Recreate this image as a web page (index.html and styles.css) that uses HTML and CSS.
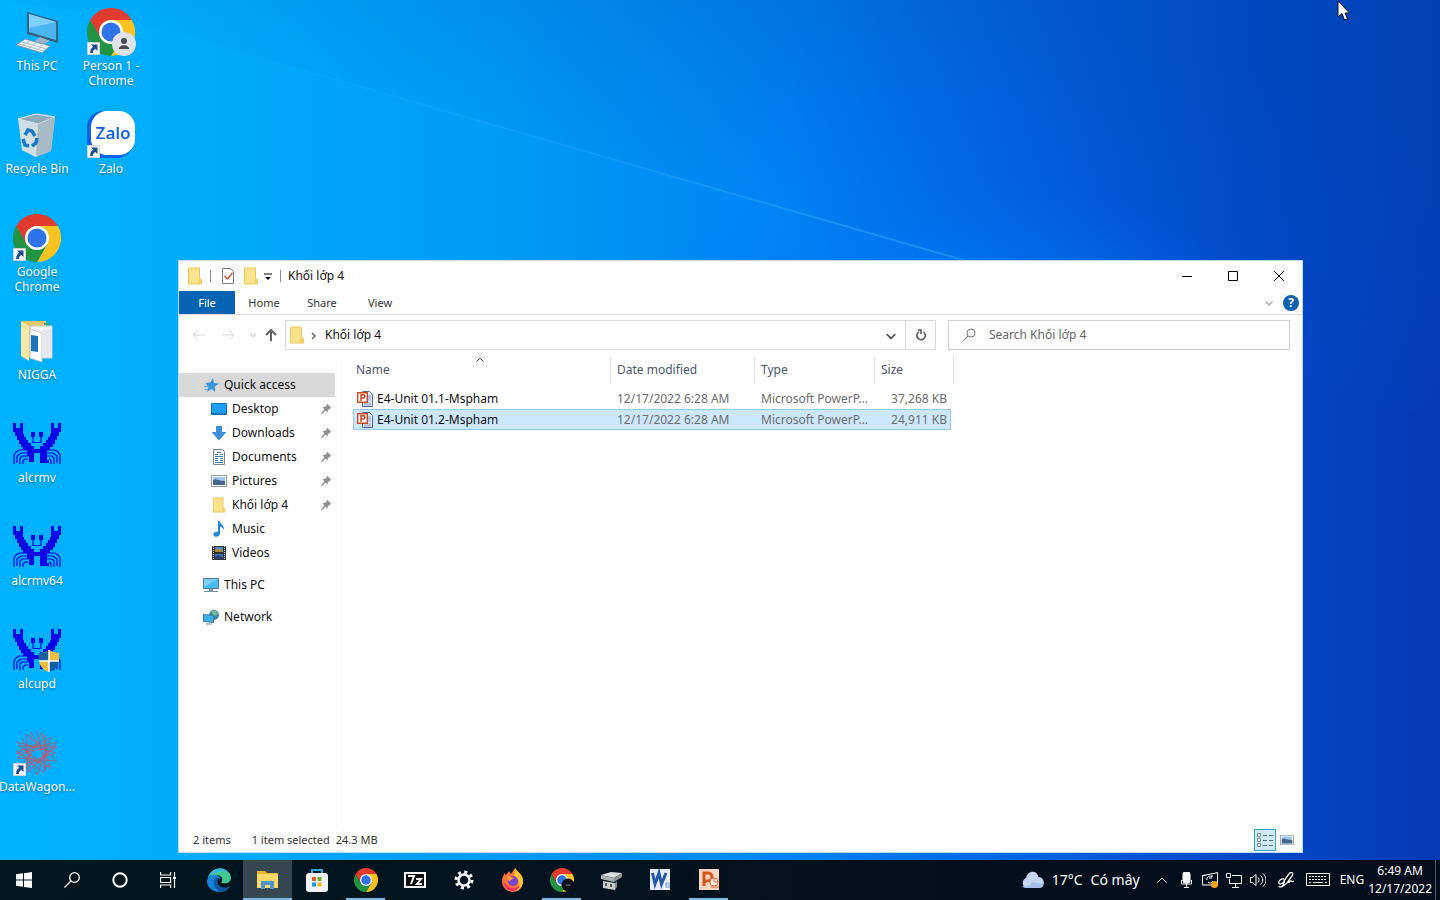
FILE: index.html
```
<!DOCTYPE html>
<html lang="vi">
<head>
  <meta charset="UTF-8">
  <title>Khối lớp 4</title>
  <link rel="stylesheet" href="styles.css">
</head>
<body>

  <!-- Shared icons -->
  <svg class="sprite" aria-hidden="true">
    <symbol id="chrome" viewBox="0 0 48 48">
      <path d="M24 24L3.200 12A24 24 0 0 1 44.800 12z" fill="#e33b2e"/>
      <path d="M24 12H44.800A24 24 0 0 1 24 48L34.400 30z" fill="#fcc31e"/>
      <path d="M34.400 30L24 48A24 24 0 0 1 3.200 12L13.600 30z" fill="#229342"/>
      <path d="M3.200 12L13.600 30 24 24V12z" fill="#e33b2e"/>
      <circle cx="24" cy="24" r="12" fill="#fff"/>
      <circle cx="24" cy="24" r="9.500" fill="#2f73e8"/>
    </symbol>
    <symbol id="shortcut" viewBox="0 0 13 13">
      <path d="M.5.5h12v12H.5z" fill="#f8f8f8" stroke="#c9d3da"/>
      <path d="M4 2.500h6.500V9L8.400 7C6.500 8 5.800 9.200 5.800 11H3.200C3 8.200 4 6.300 6.200 4.800z" fill="#1d4c8f"/>
    </symbol>
    <symbol id="crab" viewBox="0 0 48 42">
      <path fill="#0505e6" d="M0 0h3v5h4V0h3v11h1v3h2v3h2v3h3v3h3v3h6v-3h3v-3h3v-3h2v-3h2v-3h1V0h3v5h4V0h3v9h-2v4h-2v4h-2v4h-2v3h-3v3h-3v10h2v3h-9V30h-6v9h-5v-6h-2v-6h-4v-3H8v-3H6v-4H4v-4H2V9H0z"/>
      <path fill="#0505e6" d="M18 9h4v5h-4zM26 9h4v5h-4z"/>
      <path fill="none" stroke="#0505e6" stroke-width="1.200" d="M20 14v5.500h8V14M14 27H6l-3 2-2 3v9M14 30H8l-4 3v7M15 33H9l-2 2v6M15 36h-3l-2 2v3M34 27h8l3 2 2 3v9M34 30h6l4 3v7M34 33h5l2 2v6M36 36h1l1 2v3"/>
    </symbol>
    <symbol id="folder" viewBox="0 0 16 18">
      <path d="M1.500 1h11v10l2 2v4h-13z" fill="#fbe28d" stroke="#e9c65a"/>
      <path d="M12.500 11l2 2v4h-3v-4z" fill="#f3d06b"/>
    </symbol>
    <symbol id="pin" viewBox="0 0 12 12">
      <path d="M7 .5L11.500 5l-1.600.4-1.900 2 .2 2.400L5.700 7.800 1 11.500.6 11 4.300 6.300 2.300 4l2.400.1 2-1.900z" fill="#8d9298"/>
    </symbol>
    <symbol id="ppt" viewBox="0 0 16 16">
      <path d="M5.500.5h7l3 3v12h-10z" fill="#eaf0fb" stroke="#50679c"/>
      <path d="M11 5h3M11 7h3M11 9h3M7 12h7M7 14h7" stroke="#8499c8"/>
      <path d="M.7 1.700h9.600v9.600H.7z" fill="#fff" stroke="#cf4a24" stroke-width="1.400"/>
      <path d="M4 10V3.800h2.300a1.500 1.500 0 0 1 0 3.200H4" fill="none" stroke="#cf4a24" stroke-width="1.500"/>
    </symbol>
    <symbol id="picture" viewBox="0 0 16 12">
      <path d="M.5.5h15v11H.5z" fill="#fff" stroke="#8c99a6"/>
      <path d="M2 2h12v8H2z" fill="#9cc8ee"/>
      <path d="M2 5c3-2 5 1 12 1v4H2z" fill="#486a8c"/>
    </symbol>
    <symbol id="chevron-down" viewBox="0 0 10 10">
      <path d="M1.500 3.500L5 7l3.500-3.500" fill="none" stroke="currentColor" stroke-width="1.500"/>
    </symbol>
  </svg>

  <div class="screen">
    <main class="desktop">
      <svg class="wallpaper" viewBox="0 0 1440 860" preserveAspectRatio="none" aria-hidden="true">
        <defs>
          <linearGradient id="base" x1="0" y1="0" x2="1" y2="0">
            <stop offset="0" stop-color="#00b2ff"/>
            <stop offset=".12" stop-color="#00adfc"/>
            <stop offset=".35" stop-color="#009bf5"/>
            <stop offset=".55" stop-color="#0084f4"/>
            <stop offset=".7" stop-color="#0266e4"/>
            <stop offset=".86" stop-color="#0349ca"/>
            <stop offset="1" stop-color="#043ab5"/>
          </linearGradient>
          <linearGradient id="shade" gradientUnits="userSpaceOnUse" x1="540" y1="140" x2="620" y2="-120">
            <stop offset="0" stop-color="#0058c8" stop-opacity=".04"/>
            <stop offset="1" stop-color="#004cb4" stop-opacity=".36"/>
          </linearGradient>
          <linearGradient id="beam" x1="0" y1="0" x2="1" y2="0">
            <stop offset="0" stop-color="#2fb4ff" stop-opacity="0"/>
            <stop offset="1" stop-color="#2fa0ff" stop-opacity=".6"/>
          </linearGradient>
          <radialGradient id="glow">
            <stop offset="0" stop-color="#0086ff" stop-opacity=".8"/>
            <stop offset="1" stop-color="#0070f0" stop-opacity="0"/>
          </radialGradient>
        </defs>
        <path d="M0 0h1440v860H0z" fill="url(#base)"/>
        <path d="M0 0L130 20 950 256 1440 420V0z" fill="url(#shade)"/>
        <ellipse cx="950" cy="340" rx="340" ry="160" fill="url(#glow)"/>
        <path d="M150 26L970 262" fill="none" stroke="url(#beam)" stroke-width="2"/>
      </svg>

      <div class="icons">
        <a class="shortcut" href="#">
          <svg class="big" viewBox="0 0 48 48">
            <path d="M14 4l31 9v22l-31-9z" fill="#38617d"/><path d="M16 6l27 8v18l-27-8z" fill="#4bb5f2"/><path d="M16 6l27 8L16 20z" fill="#7ed0fb"/>
            <path d="M27 29l10 4-6 3-9-3z" fill="#9db6c6"/><path d="M12 31l25 7-8 7-26-8z" fill="#eef3f6" stroke="#8397a5"/><path d="M9 34l25 7M6 36l25 7M17 33l-8 5M23 35l-7 5M30 37l-7 6" stroke="#a5b5bf" stroke-width=".8"/>
          </svg>
          <span>This PC</span>
        </a>
        <a class="shortcut" href="#">
          <svg class="big" viewBox="0 0 48 48">
            <path d="M5 8l18-5 19 3-4 34-15 6-14-7z" fill="#bccdd8"/><path d="M5 8l18-5 19 3-17 7z" fill="#8fa9b9" stroke="#e3eef4"/><path d="M25 13l17-7-4 34-15 6z" fill="#a9bac6"/><path d="M6 9l19 4-2 33-14-7z" fill="#cfdde5"/>
            <path d="M12 24l3-5 4 1 3 5M10 28l2 6 4 1M19 35l4-3 1-5" fill="none" stroke="#1678c8" stroke-width="3.500"/>
          </svg>
          <span>Recycle Bin</span>
        </a>
        <a class="shortcut" href="#">
          <svg class="big"><use href="#chrome"/></svg>
          <svg class="arrow"><use href="#shortcut"/></svg>
          <span>Google Chrome</span>
        </a>
        <a class="shortcut" href="#">
          <svg class="big" viewBox="0 0 48 48">
            <path d="M9 4h24v36H14l-5-3z" fill="#e6c76c"/><path d="M17 9h22v32H17z" fill="#f6f8fa" stroke="#c4ccd2"/><path d="M17 12l12 4v29l-12-4z" fill="#fff" stroke="#bcc6cc"/><path d="M18 18l7 1v16l-7-1z" fill="#1c74bd"/><path d="M29 13l10-2v29l-10-2z" fill="#e5e9ed"/><path d="M8 4l8 5v35l-8-5z" fill="#fbe8a4"/><path d="M31 7h6" stroke="#3aa878" stroke-width="2"/>
          </svg>
          <span>NIGGA</span>
        </a>
        <a class="shortcut" href="#">
          <svg class="big"><use href="#crab"/></svg>
          <span>alcrmv</span>
        </a>
        <a class="shortcut" href="#">
          <svg class="big"><use href="#crab"/></svg>
          <span>alcrmv64</span>
        </a>
        <a class="shortcut" href="#">
          <svg class="big"><use href="#crab"/></svg>
          <svg class="shield" viewBox="0 0 22 22"><path d="M11 0c3 2 6 3 10 3 1 9-2 15-10 19C3 18 0 12 1 3c4 0 7-1 10-3z" fill="#f6bd3a"/><path d="M11 0v11H1V3c4 0 7-1 10-3zM11 11h10c-1 5-4 9-10 11z" fill="#12609f"/><path d="M11 0v11h10V3c-4 0-7-1-10-3zM11 11H1c1 5 4 9 10 11z" fill="#f6bd3a"/><path d="M11 0v22M1 11h20" stroke="#fff" stroke-width="1.500"/></svg>
          <span>alcupd</span>
        </a>
        <a class="shortcut" href="#">
          <svg class="big" viewBox="0 0 48 48" fill="none" stroke="#8c6d8d">
            <path d="M24 2l9 39L4 13l39 11L8 36 33 6l-2 38L4 22l40-9-29 30L13 5l31 27-40-3L38 8 24 46 9 9"/>
            <path d="M18 3l20 35L3 24l41-6-33 22L29 3l8 37L6 17h37L15 43z" stroke="#d0566f" stroke-width=".7"/><circle cx="24" cy="24" r="9"/>
          </svg>
          <svg class="arrow"><use href="#shortcut"/></svg>
          <span>DataWagon...</span>
        </a>
        <a class="shortcut" href="#">
          <svg class="big"><use href="#chrome"/></svg>
          <svg class="arrow"><use href="#shortcut"/></svg>
          <svg class="profile" viewBox="0 0 24 24"><circle cx="12" cy="12" r="12" fill="#dfe3e8"/><circle cx="12" cy="9" r="3" fill="#474c54"/><path d="M7 17c0-5 10-5 10 0z" fill="#474c54"/></svg>
          <span>Person 1 - Chrome</span>
        </a>
        <a class="shortcut" href="#">
          <svg class="big" viewBox="0 0 48 48">
            <rect width="46" height="47" rx="16" fill="#0a62e6"/><rect x="4" width="44" height="44" rx="16" fill="#fff"/>
            <text class="zalo" x="26" y="28" text-anchor="middle">Zalo</text>
          </svg>
          <svg class="arrow"><use href="#shortcut"/></svg>
          <span>Zalo</span>
        </a>
      </div>

      <section class="window">
        <header class="titlebar">
          <svg class="i18"><use href="#folder"/></svg>
          <i class="bar"></i>
          <svg class="i18 check" viewBox="0 0 16 18"><path d="M2.500 1.500h8l3 3v12h-11z" fill="#fff" stroke="#777"/><path d="M4.500 9l3 3 5-6" fill="none" stroke="#d1502e" stroke-width="1.500"/></svg>
          <svg class="i18"><use href="#folder"/></svg>
          <svg class="quick" viewBox="0 0 8 8"><path d="M0 1h8" stroke="#000"/><path d="M1 4h6L4 7z"/></svg>
          <i class="bar"></i>
          <h1>Khối lớp 4</h1>
          <div class="controls">
            <button aria-label="Minimize"><svg viewBox="0 0 10 10"><path d="M0 5.500h10" stroke="#000"/></svg></button>
            <button aria-label="Maximize"><svg viewBox="0 0 10 10"><path d="M.5.500h9v9h-9z" fill="none" stroke="#000"/></svg></button>
            <button aria-label="Close"><svg viewBox="0 0 10 10"><path d="M0 0l10 10M10 0L0 10" stroke="#000"/></svg></button>
          </div>
        </header>

        <nav class="tabs">
          <button class="file">File</button>
          <button>Home</button>
          <button>Share</button>
          <button>View</button>
          <svg class="i10"><use href="#chevron-down"/></svg>
          <button class="help" aria-label="Help">?</button>
        </nav>

        <div class="toolbar">
          <button class="back off" aria-label="Back"><svg viewBox="0 0 14 12"><path d="M6 1L1 6l5 5M1 6h12"/></svg></button>
          <button class="off" aria-label="Forward"><svg viewBox="0 0 14 12"><path d="M8 1l5 5-5 5M13 6H1"/></svg></button>
          <button class="recent" aria-label="Recent"><svg class="i10"><use href="#chevron-down"/></svg></button>
          <button class="up" aria-label="Up"><svg viewBox="0 0 12 14"><path d="M1 7l5-5 5 5M6 2v11"/></svg></button>
          <div class="address">
            <svg class="i18"><use href="#folder"/></svg>
            <svg class="next" viewBox="0 0 6 8"><path d="M1 1l3 3-3 3" fill="none" stroke="#666" stroke-width="1.500"/></svg>
            <span>Khối lớp 4</span>
            <svg class="i12"><use href="#chevron-down"/></svg>
            <button aria-label="Refresh"><svg class="i12" viewBox="0 0 12 12"><path d="M4 2.800A4.200 4.200 0 1 0 8.500 3M3 1h3v4M8.500 3l1 1" fill="none" stroke="#555" stroke-width="1.500"/></svg></button>
          </div>
          <label class="search">
            <svg viewBox="0 0 14 14"><circle cx="9" cy="5" r="4" fill="none" stroke="#777"/><path d="M6 8l-5.500 5.500" stroke="#777"/></svg>
            <input type="search" placeholder="Search Khối lớp 4" aria-label="Search">
          </label>
        </div>

        <div class="body">
          <nav class="sidebar">
            <a class="root on" href="#"><svg viewBox="0 0 16 16"><path d="M10 1l1 5 5 .5-4.200 3 .6 5.500-4-3L4 15l1.500-5L2.500 6l4.500-.5z" fill="#3c96dc"/><path d="M1 9.500h4M2 12.500h3" stroke="#5ba5dd"/></svg>Quick access</a>
            <a href="#"><svg viewBox="0 0 16 16"><path d="M.5 2.500h15v11H.5z" fill="#1aa0f5" stroke="#116fb4"/><path d="M1 12.500h14" stroke="#0b5c9a" stroke-dasharray="2 1"/></svg>Desktop<svg class="pin"><use href="#pin"/></svg></a>
            <a href="#"><svg viewBox="0 0 16 16"><path d="M5 1h6v6h4.500L8 15.500.5 7H5z" fill="#3a8edb"/></svg>Downloads<svg class="pin"><use href="#pin"/></svg></a>
            <a href="#"><svg viewBox="0 0 16 16"><path d="M2.500.5h9l2 2v13h-11z" fill="#fff" stroke="#79868f"/><path d="M6 3.500h4M4 5.500h3M9 5.500h3M4 7.500h8M4 9.500h3M9 9.500h3M4 11.500h3M9 11.500h3M4 13.500h8" stroke="#3a83b8"/></svg>Documents<svg class="pin"><use href="#pin"/></svg></a>
            <a href="#"><svg><use href="#picture"/></svg>Pictures<svg class="pin"><use href="#pin"/></svg></a>
            <a href="#"><svg><use href="#folder"/></svg>Khối lớp 4<svg class="pin"><use href="#pin"/></svg></a>
            <a href="#"><svg viewBox="0 0 16 16"><path d="M7 0h1.500c.5 3 5 4 4.500 9-1-2-2-3-4-3v6.500C8.500 17 2 16.500 2.500 13c.3-2 3-2.600 4.500-1.800z" fill="#1d88de"/></svg>Music</a>
            <a href="#"><svg viewBox="0 0 16 16"><path d="M1 1h14v14H1z" fill="#333"/><path d="M2.500 1v14M13.500 1v14" stroke="#ddd" stroke-dasharray="1 1"/><path d="M4 2h8v5H4z" fill="#4b8ad0"/><path d="M4 9h8v5H4z" fill="#3773b9"/><path d="M4 5l3-2 5 3v1H4z" fill="#a88b35"/><path d="M4 12l4-2 4 3v1H4z" fill="#29436b"/></svg>Videos</a>
            <a class="root gap" href="#"><svg viewBox="0 0 16 16"><path d="M.5 1.500h15v10H.5z" fill="#4ab9f5" stroke="#4c7b98"/><path d="M1 2h14L1 10z" fill="#7fd2fb"/><path d="M6 12h4v2H6z" fill="#8ba3b1"/><path d="M1 14.500h14" stroke="#748b99"/></svg>This PC</a>
            <a class="root gap" href="#"><svg viewBox="0 0 16 16"><circle cx="11" cy="6" r="5" fill="#3687aa"/><path d="M8 3l4-2 3 4-4 2z" fill="#79bd94"/><path d="M.5 5.500l10 1v7l-10-1z" fill="#3fb0ef" stroke="#3d799d"/><path d="M3 15h6" stroke="#718c9b"/></svg>Network</a>
          </nav>

          <div class="files">
            <table>
              <colgroup>
                <col class="c-name">
                <col class="c-date">
                <col class="c-type">
                <col class="c-size">
              </colgroup>
              <thead>
                <tr>
                  <th>Name<svg class="sort" viewBox="0 0 8 5"><path d="M.5 4.500L4 1l3.500 3.500" fill="none" stroke="#555"/></svg></th>
                  <th>Date modified</th>
                  <th>Type</th>
                  <th>Size</th>
                </tr>
              </thead>
              <tbody>
                <tr>
                  <td><svg><use href="#ppt"/></svg>E4-Unit 01.1-Mspham</td>
                  <td>12/17/2022 6:28 AM</td>
                  <td>Microsoft PowerP...</td>
                  <td>37,268 KB</td>
                </tr>
                <tr class="selected">
                  <td><svg><use href="#ppt"/></svg>E4-Unit 01.2-Mspham</td>
                  <td>12/17/2022 6:28 AM</td>
                  <td>Microsoft PowerP...</td>
                  <td>24,911 KB</td>
                </tr>
              </tbody>
            </table>
          </div>
        </div>

        <footer class="status">
          <span class="count">2 items</span>
          <span>1 item selected</span>
          <span>24.3 MB</span>
          <button class="view on" aria-label="Details"><svg viewBox="0 0 18 16"><path d="M1.500 1.500h3v3h-3zM1.500 6.500h3v3h-3zM1.500 11.500h3v3h-3z" fill="#fff" stroke="#7a8b95"/><path d="M7 3.500h4M13 3.500h4M7 8.500h4M13 8.500h4M7 13.500h4M13 13.500h4" stroke="#5d6c75"/></svg></button>
          <button class="view" aria-label="Large icons"><svg viewBox="0 0 16 12"><use href="#picture"/></svg></button>
        </footer>
      </section>

      <svg class="cursor" viewBox="0 0 13 21"><path d="M1 1v16l4-3.500L7.500 20l3-1.200L8 13h4.500z" fill="#fff" stroke="#111"/></svg>
    </main>

    <footer class="taskbar">
      <div class="system">
        <button aria-label="Start"><svg viewBox="0 0 16 16" fill="#fff"><path d="M0 2.300L7 1.300v6.300H0zM8 1.200L16 0v7.600H8zM0 8.500h7v6.300L0 13.800zM8 8.500h8V16l-8-1.100z"/></svg></button>
        <button aria-label="Search"><svg viewBox="0 0 16 16" fill="none" stroke="#fff" stroke-width="1.300"><circle cx="10.500" cy="5.500" r="4.800"/><path d="M7 9L.5 15.500"/></svg></button>
        <button aria-label="Cortana"><svg viewBox="0 0 16 16"><circle cx="8" cy="8" r="6.700" fill="none" stroke="#fff" stroke-width="2"/></svg></button>
        <button aria-label="Task view"><svg viewBox="0 0 16 16" fill="none" stroke="#fff" stroke-width="1.200"><path d="M.6 0v3h10V0M.6 16v-3h10v3M.6 5.500h10v5H.6zM14.500 0v16"/><path d="M13 5h3v2h-3z" fill="#fff" stroke="none"/></svg></button>
      </div>
      <div class="apps">
        <button aria-label="Edge"><svg viewBox="0 0 24 24"><path d="M1 11C2-3 24-2 24 10c0 4-4 6-8 5-2 0-2-1-1-2 2-5-6-9-14-2z" fill="#43c98f"/><path d="M1 11C4-2 18-2 21 5 15 1 5 4 1 11z" fill="#35b9df"/><path d="M0 13C1 5 11 5 14 11c-5-3-8 6 0 9 4 1 7 0 8-1-5 8-22 6-22-6z" fill="#1583da"/><path d="M9 9c-5 5-2 12 5 15 4 0 7-2 9-6-6 4-15 0-12-7z" fill="#0b57a5"/></svg></button>
        <button class="active" aria-label="File Explorer"><svg viewBox="0 0 24 24"><path d="M1 3h8l2 2h11v14H1z" fill="#e9b52a"/><path d="M1 6h21v14H1z" fill="#ffd968"/><path d="M5 13h13v8h-4v-4H9v4H5z" fill="#4c93cf"/></svg></button>
        <button aria-label="Store"><svg viewBox="0 0 24 24"><path d="M7 7V2h10v5" fill="none" stroke="#2aa9df" stroke-width="2"/><rect x="1" y="5" width="22" height="19" rx="3" fill="#f1f4f6"/><path d="M7 9h4v4H7z" fill="#e6592d"/><path d="M12.500 9h4v4h-4z" fill="#71ad28"/><path d="M7 14.500h4v4H7z" fill="#179bdc"/><path d="M12.500 14.500h4v4h-4z" fill="#f4ad1c"/></svg></button>
        <button class="running" aria-label="Chrome"><svg><use href="#chrome"/></svg></button>
        <button aria-label="7-Zip"><svg viewBox="0 0 24 24"><path d="M2 5h20v14H2z" fill="#080808" stroke="#fff" stroke-width="2"/><path d="M5 8h6l-3 8M13 11h5l-4 5h5" fill="none" stroke="#fff" stroke-width="2"/></svg></button>
        <button aria-label="Settings"><svg viewBox="0 0 24 24" fill="none" stroke="#fff"><circle cx="12" cy="12" r="5.500" stroke-width="2.500"/><circle cx="12" cy="12" r="8" stroke-width="3" stroke-dasharray="3 3.283"/></svg></button>
        <button aria-label="Firefox"><svg viewBox="0 0 24 24"><path d="M3 5l2 2 3-4 2 3 4-6c2 4 8 6 8 13 0 15-21 14-21 0 0-4 2-5 2-8z" fill="#ff7137"/><path d="M14 0c2 4 8 6 8 13 0 6-4 10-9 10 7-3 6-12 0-15z" fill="#ffc52c"/><path d="M2 12c3 9 13 10 17 5-2 9-16 8-17-5z" fill="#ec3264"/><circle cx="12" cy="13" r="5" fill="#7844cc"/><path d="M5 9c3-2 6 0 8 1-3 1-3 3-5 3z" fill="#ff9e2d"/></svg></button>
        <button class="running" aria-label="Chrome profile"><svg viewBox="0 0 24 24"><use href="#chrome" width="24" height="24"/><circle cx="18" cy="17" r="6.500" fill="#101010"/><path d="M15.500 17h5" stroke="#777"/></svg></button>
        <button aria-label="Drive"><svg viewBox="0 0 24 24"><path d="M2 7l10-3 11 1-8 5z" fill="#d9dede"/><path d="M15 10l8-5v4l-8 5z" fill="#8c9292"/><path d="M2 7l13 3v4L2 11z" fill="#acb2b2"/><path d="M4 13l12 2v7L4 20z" fill="#c7cccc"/><path d="M7 15v3M12 16v3" stroke="#555" stroke-width="2"/><path d="M16 15l2-2v6l-2 3z" fill="#868b8b"/></svg></button>
        <button aria-label="Word"><svg viewBox="0 0 24 24"><path d="M2 1h20v21H2z" fill="#e4edf9"/><path d="M16 13h6v9h-6z" fill="#fff"/><path d="M17 15h5M17 17h5M17 19h5" stroke="#5b8ad0"/><path d="M4.500 5l2.500 11 4-11 2.500 11L18 5" fill="none" stroke="#2559a8" stroke-width="3"/></svg></button>
        <button class="running" aria-label="PowerPoint"><svg viewBox="0 0 24 24"><path d="M2 1h20v21H2z" fill="#fbd5c0"/><path d="M7 18V5h4a4 4 0 0 1 0 8H7" fill="none" stroke="#d4561c" stroke-width="3"/><circle cx="17" cy="14" r="4" fill="#fff0e8" stroke="#df6c3c"/><path d="M14 19h8M17 10v4h4" stroke="#df6c3c" fill="none"/></svg></button>
      </div>
      <div class="tray">
        <a class="weather" href="#"><svg viewBox="0 0 24 18"><path d="M6 17a5.500 5.500 0 0 1 0-10C8-1 17-1 18.500 6 25 6 26 17 19 17z" fill="#c6d6f3"/><path d="M2 15c6 1 9-1 10-4 4 1 8 2 11 1 0 3-2 5-4 5H6c-2 0-3-1-4-2z" fill="#a6bfe9"/></svg><span>17°C</span><span>Có mây</span></a>
        <svg class="t12" viewBox="0 0 12 12"><path d="M1 9l5-5 5 5"/></svg>
        <svg class="t16" viewBox="0 0 16 16"><rect x="5" y="0" width="7" height="11" rx="2" fill="#fff"/><path d="M3.500 8v4h10V8M8.500 12v4M6 15.500h5"/></svg>
        <svg class="t16" viewBox="0 0 16 16"><path d="M.5 3.500h3M12 1.500l3.500-1V13H.5V3.500L12 1.500M5 8a3 3 0 0 1 5-3V3M10 6H7M11 9a3 3 0 0 1-5 1"/><circle cx="12.500" cy="12.500" r="3.500" fill="#f7a31a" stroke="none"/></svg>
        <svg class="t16" viewBox="0 0 16 16"><path d="M6 3.500h9.500v8H3.500V7M.5 1.500h4v4h-4zM9.500 12v3M6 15.500h7"/></svg>
        <svg class="t16" viewBox="0 0 16 16"><path d="M.5 5.500h2L6 2.500v11l-3.500-3h-2zM8 5.500c1.500 1.500 1.500 3.500 0 5M10.500 3.500c3 2.500 3 6.500 0 9M13 1.500c4 4 4 9 0 13"/></svg>
        <svg class="t16 pen" viewBox="0 0 16 16"><path d="M6 9l5-7c2-3 5-1 3 2l-5 7-4 3zM6 7c-4-1-7 4-4 5 2 0 3-2 5-2M1 14c1 2 3 1 4-1M10 10c1 2 2-2 3-1s1 1 3 0" stroke-width="1.300"/></svg>
        <svg class="keyboard" viewBox="0 0 24 14"><path d="M.5.500h23v12H.5z"/><path d="M3 3.500h18M3 6.500h18" stroke-dasharray="2 1"/><path d="M3 9.500h2M7 9.500h10M19 9.500h2"/></svg>
        <span class="lang">ENG</span>
        <time class="clock">6:49 AM<br>12/17/2022</time>
        <i class="peek"></i>
      </div>
    </footer>
  </div>

</body>
</html>
```

FILE: styles.css
```
* {
  box-sizing: border-box;
}
body {
  margin: 0;
  font-family: "Noto Sans", "Open Sans", sans-serif;
  font-size: 12px;
  line-height: 16px;
  color: #111;
}
svg {
  display: block;
  flex: none;
}
a {
  color: inherit;
  text-decoration: none;
}
button {
  display: flex;
  align-items: center;
  justify-content: center;
  padding: 0;
  border: 0;
  background: none;
  color: inherit;
  font: inherit;
}
.sprite {
  position: absolute;
  width: 0;
  height: 0;
}
.screen {
  display: flex;
  flex-direction: column;
  height: 100vh;
  overflow: hidden;
}

/* Desktop */
.desktop {
  position: relative;
  flex: 1;
  min-height: 0;
}
.wallpaper {
  position: absolute;
  width: 100%;
  height: 100%;
}
.icons {
  position: relative;
  display: grid;
  grid-template-rows: repeat(8, 103px);
  grid-auto-flow: column;
  justify-content: start;
  padding-top: 8px;
}
.shortcut {
  position: relative;
  display: flex;
  flex-direction: column;
  align-items: center;
  width: 74px;
  color: #fff;
  line-height: 15px;
  text-align: center;
  text-shadow: 0 1px 2px #0006;
}
.shortcut span {
  width: 70px;
  margin-top: 2px;
  display: flex;
  justify-content: center;
}
.big {
  width: 48px;
  height: 48px;
}
.arrow {
  position: absolute;
  left: 13px;
  top: 34px;
  width: 13px;
  height: 13px;
}
.shield {
  position: absolute;
  left: 38px;
  top: 24px;
  width: 22px;
  height: 22px;
}
.profile {
  position: absolute;
  left: 38px;
  top: 24px;
  width: 24px;
  height: 24px;
}
.zalo {
  font: 600 17px "Open Sans", sans-serif;
  fill: #0a5fe0;
  text-shadow: none;
}
.cursor {
  position: absolute;
  left: 1337px;
  top: 0;
  width: 13px;
  height: 21px;
}

/* Explorer window */
.window {
  position: absolute;
  left: 178px;
  top: 260px;
  right: 137px;
  bottom: 7px;
  display: flex;
  flex-direction: column;
  border: 1px solid #b9dcf5;
  background: #fff;
}
.i10 {
  width: 10px;
  height: 10px;
}
.i12 {
  width: 12px;
  height: 12px;
}
.i18 {
  width: 16px;
  height: 18px;
}
.titlebar {
  display: flex;
  align-items: center;
  height: 30px;
  padding-left: 8px;
}
.bar {
  width: 1px;
  height: 12px;
  margin-left: 7px;
  background: #888;
}
.check {
  margin: 0 7px 0 9px;
}
.quick {
  width: 8px;
  height: 8px;
  margin: 2px 0 0 5px;
}
.quick + .bar {
  margin-left: 8px;
}
h1 {
  margin: 0 auto 0 7px;
  font-size: 12px;
  font-weight: 400;
}
.controls {
  display: flex;
}
.controls button {
  width: 46px;
  height: 28px;
}
.controls svg {
  width: 10px;
  height: 10px;
}
.tabs {
  display: flex;
  align-items: center;
  height: 24px;
  padding-right: 3px;
  border-bottom: 1px solid #dadbdc;
  font-size: 11px;
  color: #333;
}
.tabs button {
  width: 58px;
  height: 23px;
}
.tabs .file {
  width: 56px;
  background: #0563b1;
  color: #fff;
}
.tabs .i10 {
  margin: 0 9px 0 auto;
  color: #aaa;
}
.tabs .help {
  width: 16px;
  height: 16px;
  border-radius: 50%;
  background: #0c62ae;
  color: #fff;
  font-size: 12px;
  font-weight: 700;
}
.toolbar {
  display: flex;
  align-items: center;
  height: 40px;
  padding: 0 12px;
}
.toolbar > button {
  width: 30px;
  height: 30px;
}
.toolbar > .back {
  width: 16px;
}
.toolbar > button svg {
  width: 14px;
  height: 12px;
  fill: none;
  stroke: #666;
  stroke-width: 2;
}
.toolbar > .off svg {
  stroke: #d6d6d6;
  stroke-width: 1;
}
.toolbar > .off + .off {
  width: 42px;
}
.toolbar > .recent {
  width: 8px;
  color: #ccc;
}
.toolbar > .recent svg {
  width: 8px;
  stroke: none;
}
.toolbar > .up {
  width: 28px;
}
.toolbar > .up svg {
  height: 14px;
}
.address {
  display: flex;
  align-items: center;
  flex: 1;
  height: 30px;
  border: 1px solid #d9d9d9;
  padding-left: 3px;
}
.address > .i12 {
  margin: 2px 8px 0 auto;
  color: #555;
}
.next {
  width: 6px;
  height: 8px;
  margin: 2px 8px 0 6px;
}
.address button {
  width: 30px;
  height: 28px;
  border-left: 1px solid #d9d9d9;
}
.search {
  display: flex;
  align-items: center;
  width: 342px;
  height: 30px;
  margin-left: 12px;
  padding-left: 13px;
  border: 1px solid #d0d0d0;
}
.search svg {
  width: 14px;
  height: 14px;
}
.search input {
  flex: 1;
  min-width: 0;
  margin-left: 13px;
  padding: 0;
  border: 0;
  outline: 0;
  background: none;
  font: inherit;
}
.search input::placeholder {
  color: #666;
}
.body {
  display: flex;
  flex: 1;
  min-height: 0;
}
.sidebar {
  width: 158px;
  padding-top: 18px;
  border-right: 1px solid #fafafa;
}
.sidebar a {
  display: flex;
  align-items: center;
  width: 156px;
  height: 24px;
  padding: 0 3px 0 32px;
}
.sidebar svg {
  width: 16px;
  height: 16px;
  margin-right: 5px;
}
.sidebar .root {
  padding-left: 24px;
}
.sidebar .on {
  background: #d9d9d9;
}
.sidebar .gap {
  margin-top: 8px;
}
.sidebar .pin {
  width: 12px;
  height: 12px;
  margin: 0 0 0 auto;
}
.files {
  flex: 1;
  padding: 1px 0 0 16px;
}
table {
  width: 598px;
  table-layout: fixed;
  border-collapse: collapse;
}
.c-name {
  width: 258px;
}
.c-date {
  width: 144px;
}
.c-type {
  width: 120px;
}
th {
  position: relative;
  height: 32px;
  padding: 0 0 4px 6px;
  color: #4c566b;
  font-weight: 400;
  text-align: left;
}
th::after {
  content: "";
  position: absolute;
  right: 0;
  top: 0;
  height: 28px;
  border-right: 1px solid #e5e5e5;
}
th:first-child {
  padding-left: 3px;
}
th:last-child::after {
  right: -3px;
}
.sort {
  position: absolute;
  left: 123px;
  top: 1px;
  width: 8px;
  height: 5px;
}
td {
  height: 21px;
  padding: 0 0 0 6px;
  color: #6d6d6d;
  white-space: nowrap;
}
td:first-child {
  display: flex;
  align-items: center;
  gap: 4px;
  padding-left: 4px;
  color: #111;
}
td svg {
  width: 16px;
  height: 16px;
}
td:last-child {
  padding-right: 4px;
  text-align: right;
}
.selected {
  background: #cce8ff;
  outline: 1px solid #99c9ec;
  outline-offset: -1px;
}
.status {
  display: flex;
  align-items: center;
  height: 24px;
  padding: 0 4px 0 14px;
  gap: 6px;
  font-size: 11px;
  color: #333;
}
.count {
  margin-right: 15px;
}
.view {
  width: 22px;
  height: 22px;
}
.view svg {
  width: 14px;
  height: 12px;
}
.view.on {
  margin-left: auto;
  margin-right: -6px;
  border: 1px solid #3aa0c8;
  background: #cdebf6;
}
.view.on svg {
  width: 18px;
  height: 16px;
}

/* Taskbar */
.taskbar {
  display: flex;
  height: 40px;
  background: linear-gradient(90deg, #02171f, #030d1b);
  color: #fff;
}
.system {
  display: flex;
}
.system button {
  width: 48px;
}
.system svg {
  width: 16px;
  height: 16px;
}
.apps {
  display: flex;
  margin-left: 2px;
}
.apps button {
  position: relative;
  width: 49px;
}
.apps svg {
  width: 24px;
  height: 24px;
}
.active {
  background: #37474f;
}
.active::after, .running::after {
  content: "";
  position: absolute;
  left: 0;
  right: 0;
  bottom: 0;
  height: 2px;
  background: #76b9ed;
}
.running::after {
  left: 5px;
  right: 5px;
}
.tray {
  display: flex;
  align-items: center;
  margin-left: auto;
}
.tray > svg {
  fill: none;
  stroke: #fff;
}
.weather {
  display: flex;
  align-items: center;
  gap: 8px;
  margin-right: 16px;
  font-size: 14px;
}
.weather svg {
  width: 24px;
  height: 18px;
}
.t12 {
  width: 12px;
  height: 12px;
  margin-right: 10px;
}
.t16 {
  width: 16px;
  height: 16px;
  margin-right: 8px;
}
.pen {
  margin: 0 12px 0 4px;
}
.keyboard {
  width: 24px;
  height: 14px;
  margin-right: 10px;
}
.clock {
  margin: 0 3px 0 4px;
  line-height: 18px;
  text-align: center;
}
.peek {
  width: 5px;
  height: 40px;
  border-left: 1px solid #56606c;
}
```
